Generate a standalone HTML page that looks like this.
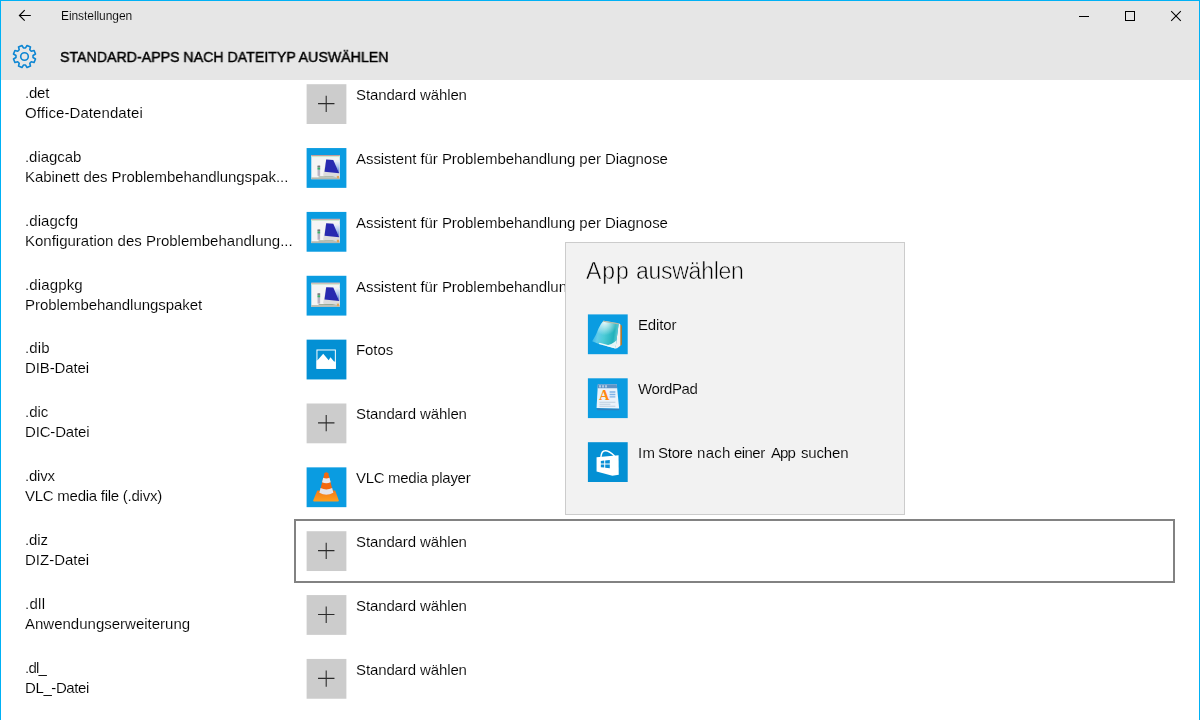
<!DOCTYPE html>
<html lang="de">
<head>
<meta charset="utf-8">
<title>Einstellungen</title>
<style>
*{box-sizing:border-box;margin:0;padding:0}
html,body{width:1200px;height:720px;overflow:hidden;background:#fff}
body{font-family:"Liberation Sans",sans-serif;color:#000;position:relative;font-size:15px}
#win{position:absolute;left:0;top:0;width:1200px;height:720px;overflow:hidden}
#bord{position:absolute;left:0;top:0;width:1200px;height:721px;border:1px solid #00b1f5;z-index:9;pointer-events:none}
#head{position:absolute;left:0;top:0;width:1200px;height:80px;background:#e6e6e6}
.abs{position:absolute}
.t{position:absolute;white-space:pre;line-height:20px;font-size:15px;color:#000;will-change:transform;-webkit-text-stroke:0.12px #fff}
#pop .t{-webkit-text-stroke-color:#f2f2f2}
#title{-webkit-text-stroke:0.1px #e6e6e6}
#title{font-size:12px;line-height:16px}
#h1{font-weight:normal;-webkit-text-stroke:0.45px #000;transform:scaleX(0.945);transform-origin:0 0}
.tile{position:absolute;display:block}
#focus{position:absolute;left:294px;top:519px;width:881px;height:64px;border:2px solid #828282}
#pop{position:absolute;left:565px;top:242px;width:340px;height:273px;background:#f2f2f2;border:1px solid #cccccc}
#poph .t{font-size:23px;line-height:30px;-webkit-text-stroke:0.55px #f2f2f2}
</style>
</head>
<body>
<div id="win">
<svg width="0" height="0" style="position:absolute"><defs><linearGradient id="dl" x1="0" y1="0" x2="0" y2="1"><stop offset="0" stop-color="#f4f6fb"/><stop offset=".5" stop-color="#a9c4ee"/><stop offset="1" stop-color="#3f6fd6"/></linearGradient><linearGradient id="vb" x1="0" y1="0" x2="0" y2="1"><stop offset="0" stop-color="#f47a16"/><stop offset="1" stop-color="#ffa01e"/></linearGradient><linearGradient id="eg" x1="4" y1="20" x2="31" y2="24" gradientUnits="userSpaceOnUse"><stop offset="0" stop-color="#2fb0ea"/><stop offset=".22" stop-color="#62cdea"/><stop offset=".45" stop-color="#4ccbd6"/><stop offset=".8" stop-color="#22b1bc"/><stop offset="1" stop-color="#7fd6da"/></linearGradient><radialGradient id="eh" cx="17" cy="8" r="13" gradientUnits="userSpaceOnUse"><stop offset="0" stop-color="#fff" stop-opacity=".85"/><stop offset="1" stop-color="#fff" stop-opacity="0"/></radialGradient></defs></svg>
<div id="head">
<svg class="abs" style="left:18px;top:9px" width="14" height="13" viewBox="0 0 14 13"><path d="M12.8 6.5H1.6M6.7 1.2L1.4 6.5L6.7 11.6" fill="none" stroke="#000" stroke-width="1.15"/></svg>
<div class="t " id="title" style="left:60.5px;top:8px;letter-spacing:-0.075px;">Einstellungen</div>
<svg class="abs" style="left:12.3px;top:43.8px" width="25" height="25" viewBox="0 0 25 25"><path d="M21.04 13.55 L23.51 15.04 L22.08 18.49 L19.28 17.79 L17.79 19.28 L18.49 22.08 L15.04 23.51 L13.55 21.04 L11.45 21.04 L9.96 23.51 L6.51 22.08 L7.21 19.28 L5.72 17.79 L2.92 18.49 L1.49 15.04 L3.96 13.55 L3.96 11.45 L1.49 9.96 L2.92 6.51 L5.72 7.21 L7.21 5.72 L6.51 2.92 L9.96 1.49 L11.45 3.96 L13.55 3.96 L15.04 1.49 L18.49 2.92 L17.79 5.72 L19.28 7.21 L22.08 6.51 L23.51 9.96 L21.04 11.45Z" fill="none" stroke="#0d86d3" stroke-width="1.6" stroke-linejoin="round"/><circle cx="12.5" cy="12.5" r="3.8" fill="none" stroke="#0d86d3" stroke-width="1.6"/></svg>
<div class="t " id="h1" style="left:60px;top:46.6px;">STANDARD-APPS NACH DATEITYP AUSWÄHLEN</div>
<svg class="abs" style="left:1070px;top:4px" width="120" height="24" viewBox="0 0 120 24"><path d="M9 12.5H19" stroke="#000" stroke-width="1" fill="none"/><rect x="55.5" y="7.5" width="9" height="9" fill="none" stroke="#000" stroke-width="1"/><path d="M101.2 7.2L110.8 16.8M110.8 7.2L101.2 16.8" stroke="#000" stroke-width="1.05" fill="none"/></svg>
</div>
<div class="t ext" id="e0" style="left:25px;top:83px;letter-spacing:-0.225px;">.det</div>
<div class="t desc" id="d0" style="left:25px;top:103px;letter-spacing:0.084px;">Office-Datendatei</div>
<svg class="tile" style="left:306px;top:84px" width="42" height="42" viewBox="0 0 42 42"><g transform="translate(0.60 0.20) scale(0.9950)"><rect width="40" height="40" fill="#cccccc"/><path d="M11.5 19.5H28M19.7 11.5V28" stroke="#2b2b2b" stroke-width="1.1" fill="none"/></g></svg>
<div class="t app" id="a0" style="left:356.3px;top:85px;letter-spacing:-0.116px;">Standard wählen</div>
<div class="t ext" id="e1" style="left:25px;top:147px;letter-spacing:-0.064px;">.diagcab</div>
<div class="t desc" id="d1" style="left:25px;top:167px;letter-spacing:-0.075px;">Kabinett des Problembehandlungspak...</div>
<svg class="tile" style="left:306px;top:148px" width="42" height="42" viewBox="0 0 42 42"><g transform="translate(0.60 0.06) scale(0.9950)"><rect width="40" height="40" fill="#0a9ce1"/>
<rect x="4.7" y="7" width="28.7" height="24.3" fill="#f5f5f5"/><rect x="4.7" y="7" width="28.7" height="1" fill="#c49a98"/><rect x="4.7" y="8" width="28.7" height="1.1" fill="#cfe8d0"/>
<rect x="4.7" y="29.5" width="28.7" height="1.8" fill="#b4b9b0"/>
<path d="M16.6 27.6L19.6 11.6L33.4 12.2V29.4H19z" fill="#dcdcdc"/>
<path d="M26.7 11.9L33.3 12.4L32.8 25.4z" fill="url(#dl)"/>
<path d="M19.7 11.5L26.8 11.9L32.8 25.4L18 23.9z" fill="#2829b0"/>
<rect x="11" y="18" width="2.6" height="10" fill="#b9b4c4"/><rect x="11" y="19.6" width="2.6" height="2" fill="#3bb26a"/><rect x="11" y="17.6" width="2.6" height="1.6" fill="#777"/>
<path d="M12 28.6h14l4 .8H12z" fill="#86987f"/><rect x="30.4" y="28" width="2.2" height="2.4" fill="#e0a45a"/>
</g></svg>
<div class="t app" id="a1" style="left:356.3px;top:149px;letter-spacing:-0.056px;">Assistent für Problembehandlung per Diagnose</div>
<div class="t ext" id="e2" style="left:25px;top:211px;letter-spacing:0.064px;">.diagcfg</div>
<div class="t desc" id="d2" style="left:25px;top:231px;">Konfiguration des Problembehandlung...</div>
<svg class="tile" style="left:306px;top:211px" width="42" height="42" viewBox="0 0 42 42"><g transform="translate(0.60 0.92) scale(0.9950)"><rect width="40" height="40" fill="#0a9ce1"/>
<rect x="4.7" y="7" width="28.7" height="24.3" fill="#f5f5f5"/><rect x="4.7" y="7" width="28.7" height="1" fill="#c49a98"/><rect x="4.7" y="8" width="28.7" height="1.1" fill="#cfe8d0"/>
<rect x="4.7" y="29.5" width="28.7" height="1.8" fill="#b4b9b0"/>
<path d="M16.6 27.6L19.6 11.6L33.4 12.2V29.4H19z" fill="#dcdcdc"/>
<path d="M26.7 11.9L33.3 12.4L32.8 25.4z" fill="url(#dl)"/>
<path d="M19.7 11.5L26.8 11.9L32.8 25.4L18 23.9z" fill="#2829b0"/>
<rect x="11" y="18" width="2.6" height="10" fill="#b9b4c4"/><rect x="11" y="19.6" width="2.6" height="2" fill="#3bb26a"/><rect x="11" y="17.6" width="2.6" height="1.6" fill="#777"/>
<path d="M12 28.6h14l4 .8H12z" fill="#86987f"/><rect x="30.4" y="28" width="2.2" height="2.4" fill="#e0a45a"/>
</g></svg>
<div class="t app" id="a2" style="left:356.3px;top:213px;letter-spacing:-0.056px;">Assistent für Problembehandlung per Diagnose</div>
<div class="t ext" id="e3" style="left:25px;top:275px;letter-spacing:0.129px;">.diagpkg</div>
<div class="t desc" id="d3" style="left:25px;top:295px;letter-spacing:-0.061px;">Problembehandlungspaket</div>
<svg class="tile" style="left:306px;top:275px" width="42" height="42" viewBox="0 0 42 42"><g transform="translate(0.60 0.78) scale(0.9950)"><rect width="40" height="40" fill="#0a9ce1"/>
<rect x="4.7" y="7" width="28.7" height="24.3" fill="#f5f5f5"/><rect x="4.7" y="7" width="28.7" height="1" fill="#c49a98"/><rect x="4.7" y="8" width="28.7" height="1.1" fill="#cfe8d0"/>
<rect x="4.7" y="29.5" width="28.7" height="1.8" fill="#b4b9b0"/>
<path d="M16.6 27.6L19.6 11.6L33.4 12.2V29.4H19z" fill="#dcdcdc"/>
<path d="M26.7 11.9L33.3 12.4L32.8 25.4z" fill="url(#dl)"/>
<path d="M19.7 11.5L26.8 11.9L32.8 25.4L18 23.9z" fill="#2829b0"/>
<rect x="11" y="18" width="2.6" height="10" fill="#b9b4c4"/><rect x="11" y="19.6" width="2.6" height="2" fill="#3bb26a"/><rect x="11" y="17.6" width="2.6" height="1.6" fill="#777"/>
<path d="M12 28.6h14l4 .8H12z" fill="#86987f"/><rect x="30.4" y="28" width="2.2" height="2.4" fill="#e0a45a"/>
</g></svg>
<div class="t app" id="a3" style="left:356.3px;top:277px;letter-spacing:-0.056px;">Assistent für Problembehandlung per Diagnose</div>
<div class="t ext" id="e4" style="left:25px;top:338px;letter-spacing:0.150px;">.dib</div>
<div class="t desc" id="d4" style="left:25px;top:358px;letter-spacing:-0.112px;">DIB-Datei</div>
<svg class="tile" style="left:306px;top:339px" width="42" height="42" viewBox="0 0 42 42"><g transform="translate(0.60 0.64) scale(0.9950)"><rect width="40" height="40" fill="#0390d4"/><rect x="10.4" y="10.4" width="18.5" height="18.5" fill="none" stroke="#fff" stroke-width="1"/><path d="M10 21.2L11.4 20.2L16.7 14.2L22.2 20.6L24 17.7L27.3 21.6L29.3 22.4V29.3H10z" fill="#fff"/></g></svg>
<div class="t app" id="a4" style="left:356.3px;top:340px;letter-spacing:-0.089px;">Fotos</div>
<div class="t ext" id="e5" style="left:25px;top:402px;">.dic</div>
<div class="t desc" id="d5" style="left:25px;top:422px;letter-spacing:-0.169px;">DIC-Datei</div>
<svg class="tile" style="left:306px;top:403px" width="42" height="42" viewBox="0 0 42 42"><g transform="translate(0.60 0.50) scale(0.9950)"><rect width="40" height="40" fill="#cccccc"/><path d="M11.5 19.5H28M19.7 11.5V28" stroke="#2b2b2b" stroke-width="1.1" fill="none"/></g></svg>
<div class="t app" id="a5" style="left:356.3px;top:404px;letter-spacing:-0.116px;">Standard wählen</div>
<div class="t ext" id="e6" style="left:25px;top:466px;letter-spacing:-0.225px;">.divx</div>
<div class="t desc" id="d6" style="left:25px;top:486px;letter-spacing:-0.257px;">VLC media file (.divx)</div>
<svg class="tile" style="left:306px;top:467px" width="42" height="42" viewBox="0 0 42 42"><g transform="translate(0.60 0.36) scale(0.9950)"><rect width="40" height="40" fill="#0a9ce1"/>
<path d="M10.7 23.3H28.7L32.4 33.4Q32.4 34.3 31.4 34.3H7.6Q6.6 34.3 6.6 33.4z" fill="url(#vb)"/>
<path d="M18 6Q19.8 3.6 21.7 6L26.8 25.4Q19.8 29.6 12.9 25.4z" fill="#f4690e"/>
<path d="M16.7 10.4Q19.8 11.8 23 10.4L24.2 15Q19.8 17 15.5 15z" fill="#e9e9ee"/>
<path d="M14 20.8Q19.8 23.6 25.7 20.8L26.9 25.6Q19.8 29.6 12.8 25.6z" fill="#e4e4ea"/>
</g></svg>
<div class="t app" id="a6" style="left:356.3px;top:468px;letter-spacing:-0.306px;">VLC media player</div>
<div class="t ext" id="e7" style="left:25px;top:530px;letter-spacing:-0.150px;">.diz</div>
<div class="t desc" id="d7" style="left:25px;top:550px;">DIZ-Datei</div>
<svg class="tile" style="left:306px;top:531px" width="42" height="42" viewBox="0 0 42 42"><g transform="translate(0.60 0.22) scale(0.9950)"><rect width="40" height="40" fill="#cccccc"/><path d="M11.5 19.5H28M19.7 11.5V28" stroke="#2b2b2b" stroke-width="1.1" fill="none"/></g></svg>
<div class="t app" id="a7" style="left:356.3px;top:532px;letter-spacing:-0.116px;">Standard wählen</div>
<div class="t ext" id="e8" style="left:25px;top:594px;letter-spacing:0.300px;">.dll</div>
<div class="t desc" id="d8" style="left:25px;top:614px;">Anwendungserweiterung</div>
<svg class="tile" style="left:306px;top:595px" width="42" height="42" viewBox="0 0 42 42"><g transform="translate(0.60 0.08) scale(0.9950)"><rect width="40" height="40" fill="#cccccc"/><path d="M11.5 19.5H28M19.7 11.5V28" stroke="#2b2b2b" stroke-width="1.1" fill="none"/></g></svg>
<div class="t app" id="a8" style="left:356.3px;top:596px;letter-spacing:-0.116px;">Standard wählen</div>
<div class="t ext" id="e9" style="left:25px;top:658px;letter-spacing:-0.750px;">.dl_</div>
<div class="t desc" id="d9" style="left:25px;top:678px;letter-spacing:-0.394px;">DL_-Datei</div>
<svg class="tile" style="left:306px;top:658px" width="42" height="42" viewBox="0 0 42 42"><g transform="translate(0.60 0.94) scale(0.9950)"><rect width="40" height="40" fill="#cccccc"/><path d="M11.5 19.5H28M19.7 11.5V28" stroke="#2b2b2b" stroke-width="1.1" fill="none"/></g></svg>
<div class="t app" id="a9" style="left:356.3px;top:660px;letter-spacing:-0.116px;">Standard wählen</div>
<div id="focus"></div>
<div id="pop">
<div id="poph"><span class="t " id="pophw0" style="left:20.06px;top:13px;letter-spacing:0.990px;">App </span><span class="t " id="pophw1" style="left:70.06px;top:13px;letter-spacing:-0.269px;">auswählen</span></div>
<svg class="tile" style="left:21px;top:71px" width="42" height="42" viewBox="0 0 42 42"><g transform="translate(0.90 0.40) scale(0.9950)"><rect width="40" height="40" fill="#0a9ce1"/>
<path d="M32.2 9.8L34.2 11.4V30.4L30.2 33z" fill="#b5782a"/>
<path d="M27.7 34.2L31 9L32.6 10V31.6L29.4 34z" fill="#f4f1f0"/>
<path d="M15.7 6.3L31 9L27.7 34.2L11 29.7L4.3 27Q8.6 20 10.6 14.3Q12.6 9.6 15.7 6.3z" fill="url(#eg)"/>
<path d="M15.7 6.3L31 9L27.7 34.2L11 29.7L4.3 27Q8.6 20 10.6 14.3Q12.6 9.6 15.7 6.3z" fill="url(#eh)"/>
<path d="M17 31.3L27.7 34.2L28.8 26Q24 31 17 31.3z" fill="#f3fbfc" opacity=".9"/>
<path d="M11 29.7L27.7 34.2L27.9 32.7L11.5 28.4z" fill="#eef9fb"/><path d="M15.7 6.3L31 9L31 10.2L15.2 7.3z" fill="#b7b9a6"/>
</g></svg>
<div class="t app" id="p0" style="left:72px;top:71.9px;letter-spacing:-0.162px;">Editor</div>
<svg class="tile" style="left:21px;top:135px" width="42" height="42" viewBox="0 0 42 42"><g transform="translate(0.90 0.30) scale(0.9950)"><rect width="40" height="40" fill="#0a9ce1"/>
<path d="M9 30L31.6 30.6L31.2 32.2H9.4z" fill="#2f7fbd"/>
<path d="M10 6H29L31.4 30.4L8.7 29.8z" fill="#eaf3fb"/>
<path d="M10 6H29L29.4 10H9.8z" fill="#5d93c6"/>
<path d="M11.4 7h1.6v2.2h-1.6zM14.4 7h1.6v2.2h-1.6zM17.4 7h1.6v2.2h-1.6z" fill="#c7d8ea"/>
<text x="16.3" y="21.4" text-anchor="middle" font-family="Liberation Serif,serif" font-weight="bold" font-size="14.5" fill="#ff8a14">A</text>
<path d="M21.8 13h5.8v1.6h-5.8zM21.8 15.6h5.8v1.4h-5.8zM21.8 18h5.8v1.4h-5.8z" fill="#7db2e6"/>
<path d="M11.6 23.6h16v.9h-16zM11.6 25.6h11v.9h-11zM11.6 27.6h16v.9h-16z" fill="#bfcfdf"/>
</g></svg>
<div class="t app" id="p1" style="left:72px;top:135.8px;letter-spacing:-0.420px;">WordPad</div>
<svg class="tile" style="left:21px;top:199px" width="42" height="42" viewBox="0 0 42 42"><g transform="translate(0.90 0.20) scale(0.9950)"><rect width="40" height="40" fill="#0390d4"/>
<path d="M13 15.4Q13.6 8.6 17.2 8.6Q21 8.4 26.8 13.8" fill="none" stroke="#fff" stroke-width="1.5"/>
<path d="M8.7 15L30.8 13.2L31 32.6L24.6 33.6L8.7 29.4z" fill="#fff"/>
<path d="M13 18.8L16.4 18.5V21.4H13zM17.4 18.4L22 17.9V21.4H17.4zM13 22.4H16.4V25.5L13 25.1zM17.4 22.4H22V26.2L17.4 25.6z" fill="#0a8fd6"/>
</g></svg>
<div id="p2"><span class="t app" id="p2w0" style="left:71.60px;top:199.7px;letter-spacing:0.450px;">Im </span><span class="t app" id="p2w1" style="left:91.80px;top:199.7px;letter-spacing:-0.224px;">Store </span><span class="t app" id="p2w2" style="left:131.00px;top:199.7px;letter-spacing:0.300px;">nach </span><span class="t app" id="p2w3" style="left:167.50px;top:199.7px;letter-spacing:-0.550px;">einer </span><span class="t app" id="p2w4" style="left:204.80px;top:199.7px;letter-spacing:-0.950px;">App </span><span class="t app" id="p2w5" style="left:235.10px;top:199.7px;letter-spacing:-0.180px;">suchen</span></div>
</div>
<div id="bord"></div>
</div>
</body>
</html>
